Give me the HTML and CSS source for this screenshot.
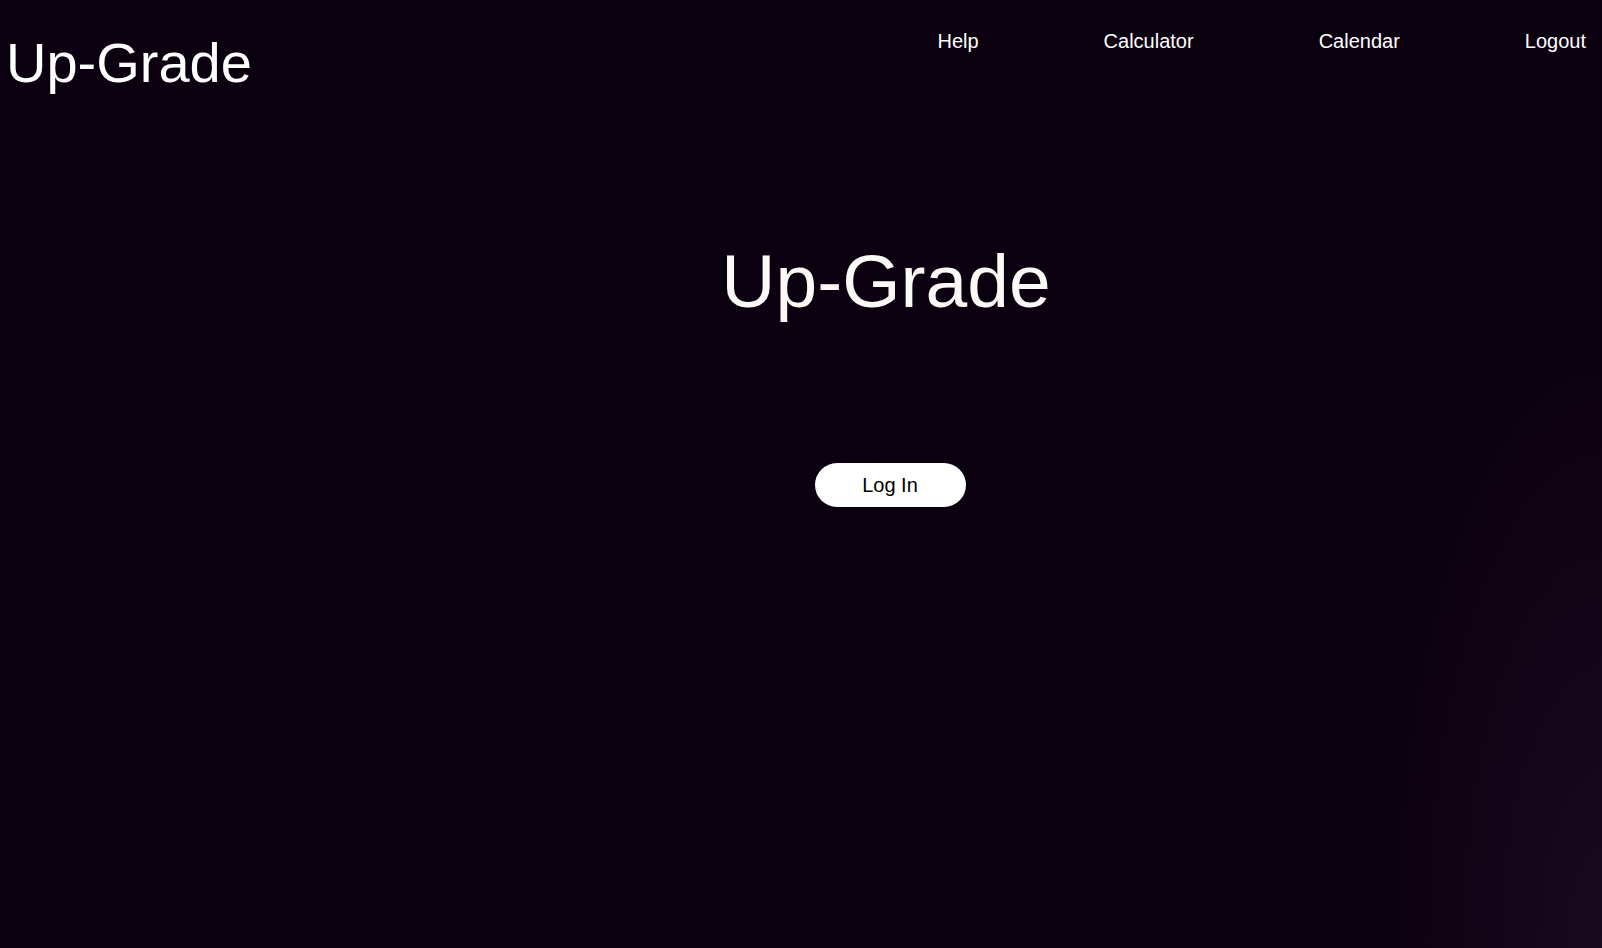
FILE: index.html
```html
<!DOCTYPE html>
<html lang="en">
<head>
<meta charset="utf-8">
<title>Up-Grade</title>
<link rel="stylesheet" href="styles.css">
</head>
<body>
<div class="page">
  <header class="header">
    <div class="logo">Up-Grade</div>
    <nav class="nav">
      <a class="nav-link" href="#">Help</a>
      <a class="nav-link" href="#">Calculator</a>
      <a class="nav-link" href="#">Calendar</a>
      <a class="nav-link" href="#">Logout</a>
    </nav>
  </header>
  <main class="main">
    <h1 class="title">Up-Grade</h1>
    <button class="login-btn" type="button">Log In</button>
  </main>
</div>
</body>
</html>
```
FILE: styles.css
```css
html, body {
  margin: 0;
  padding: 0;
  height: 100%;
}
body {
  font-family: "Liberation Sans", Arial, sans-serif;
  background-color: #0b0010;
  color: #ffffff;
}
.page {
  min-height: 100vh;
  background: radial-gradient(ellipse 230px 650px at 100% 100%, rgba(28, 12, 32, 0.85) 0%, rgba(11, 0, 16, 0) 100%);
  box-sizing: border-box;
}
.header {
  display: flex;
  justify-content: space-between;
  align-items: flex-start;
}
.logo {
  font-size: 56px;
  line-height: normal;
  margin-top: 30px;
  padding-left: 6px;
  color: #ffffff;
}
.nav {
  display: flex;
  gap: 125px;
  margin-top: 30px;
  padding-right: 16px;
}
.nav-link {
  font-size: 20px;
  line-height: 23px;
  color: #ffffff;
  text-decoration: none;
}
.main {
  display: flex;
  flex-direction: column;
  align-items: center;
  padding-left: 174px;
}
.title {
  margin: 143px 0 0 0;
  font-size: 75px;
  font-weight: normal;
  line-height: normal;
  color: #fbf9f5;
  position: relative;
  left: -2px;
}
.login-btn {
  margin-top: 139px;
  width: 151px;
  height: 44px;
  border: none;
  border-radius: 22px;
  background: #ffffff;
  color: #000000;
  font-family: "Liberation Sans", Arial, sans-serif;
  font-size: 20px;
  line-height: 23px;
  padding: 0;
  cursor: pointer;
  position: relative;
  left: 2px;
}
```
